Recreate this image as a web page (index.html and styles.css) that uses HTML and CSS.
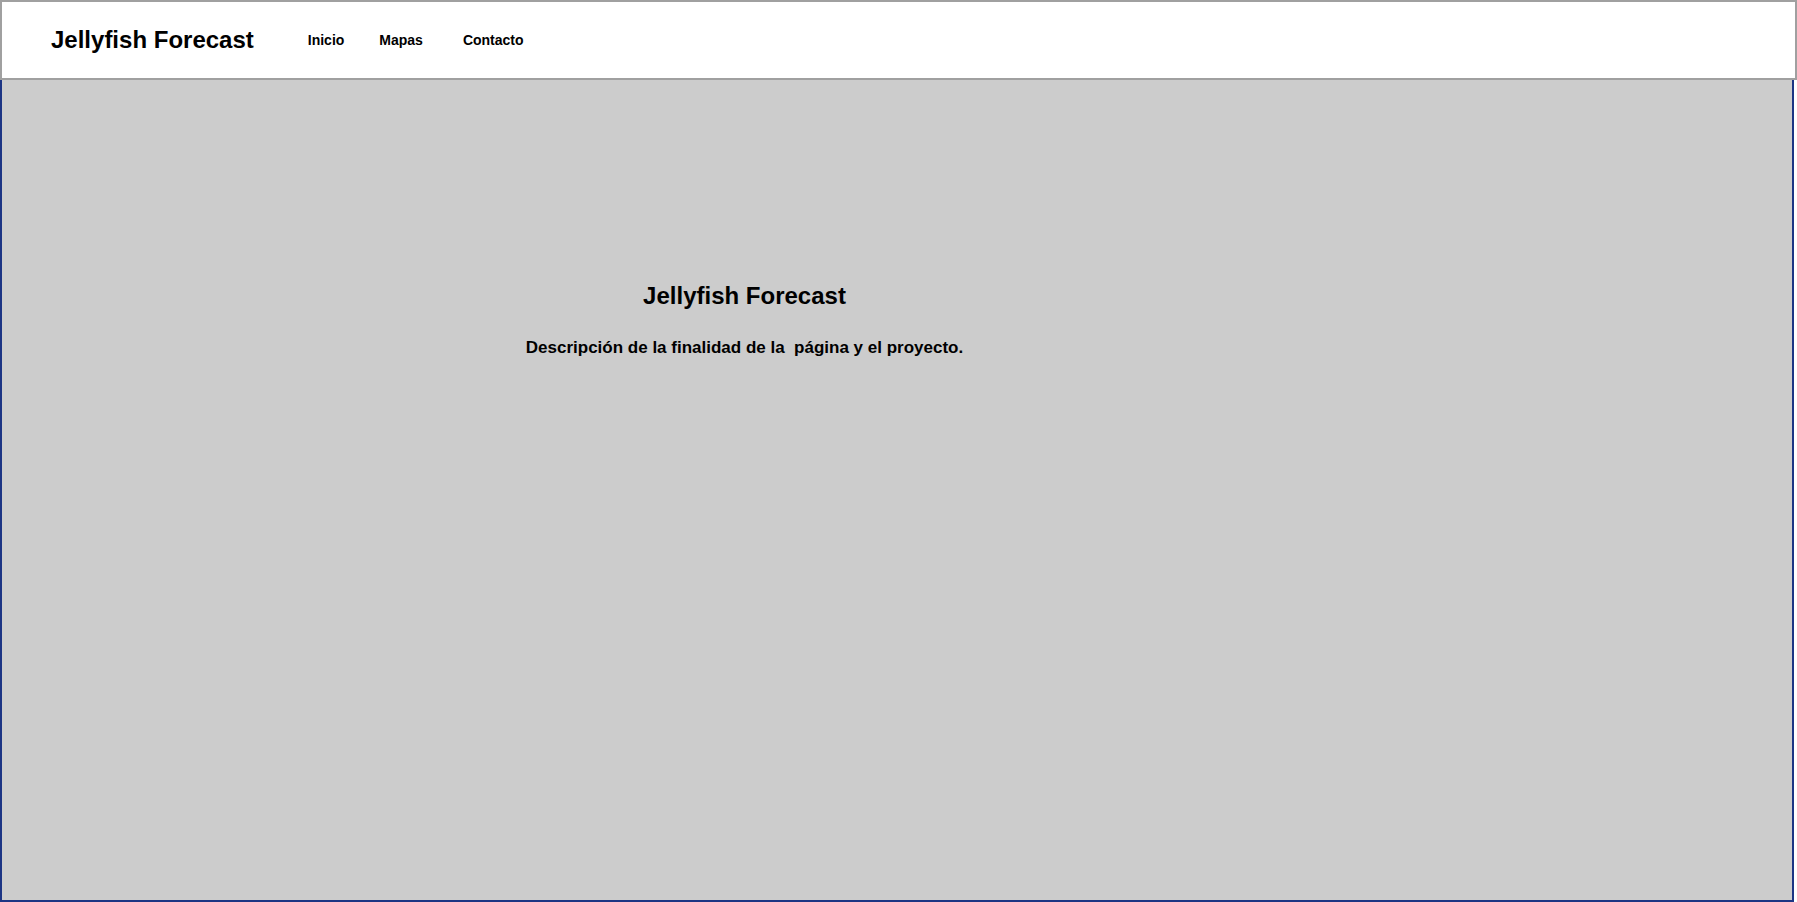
FILE: index.html
```html
<!DOCTYPE html>
<html lang="es">
<head>
<meta charset="utf-8">
<title>Jellyfish Forecast</title>
<link rel="stylesheet" href="styles.css">
</head>
<body>
<header class="topbar">
  <div class="brand">Jellyfish Forecast</div>
  <nav class="nav">
    <a class="nav-link nav-inicio" href="#">Inicio</a>
    <a class="nav-link nav-mapas" href="#">Mapas</a>
    <a class="nav-link" href="#">Contacto</a>
  </nav>
</header>
<main class="main">
  <section class="intro">
    <h2 class="intro-title">Jellyfish Forecast</h2>
    <p class="intro-text">Descripción de la finalidad de la &nbsp;página y el proyecto.</p>
  </section>
</main>
</body>
</html>
```

FILE: styles.css
```css
html, body {
  margin: 0;
  padding: 0;
  height: 902px;
  overflow: hidden;
  background: #ffffff;
  font-family: "Liberation Sans", Arial, sans-serif;
  color: #000;
}

.topbar {
  box-sizing: border-box;
  width: 1797px;
  height: 80px;
  border: 2px solid #a0a0a0;
  background: #ffffff;
  display: flex;
  align-items: center;
  padding-left: 49px;
}

.brand {
  font-size: 24px;
  font-weight: bold;
  line-height: 28px;
}

.nav {
  display: flex;
  align-items: center;
  margin-left: 54px;
}

.nav-link {
  font-size: 14px;
  font-weight: bold;
  color: #000;
  text-decoration: none;
  line-height: 16px;
}

.nav-inicio {
  margin-right: 35px;
}

.nav-mapas {
  margin-right: 40px;
}

.main {
  box-sizing: border-box;
  width: 1794px;
  height: 822px;
  border: 2px solid #1c3584;
  border-top: none;
  background: #cccccc;
  padding-top: 202px;
}

.intro {
  width: 1485px;
  text-align: center;
}

.intro-title {
  margin: 0;
  font-size: 24px;
  font-weight: bold;
  line-height: 28px;
}

.intro-text {
  margin: 28px 0 0;
  font-size: 17px;
  font-weight: bold;
  line-height: 20px;
}
```
